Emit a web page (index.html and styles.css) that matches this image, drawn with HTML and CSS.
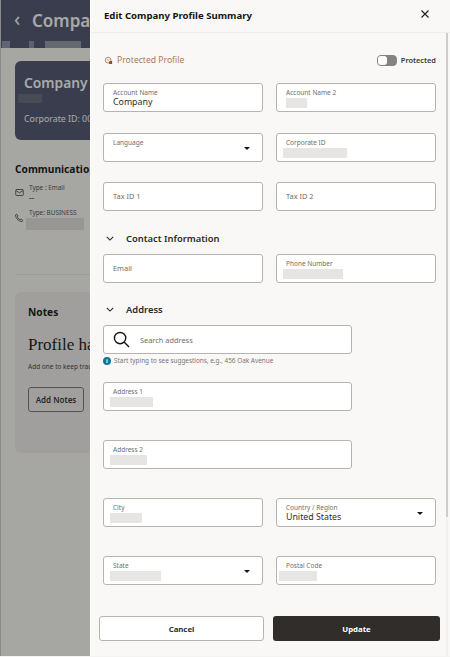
FILE: index.html
```html
<!DOCTYPE html>
<html lang="en">
<head>
<meta charset="utf-8">
<title>Edit Company Profile Summary</title>
<link rel="stylesheet" href="styles.css">
</head>
<body>
<div class="page">
  <div class="under">
    <header class="page-head">
      <span class="back">&#8249;</span>
      <span class="page-title">Company</span>
    </header>
    <div class="head-strip"></div>
    <section class="company-card">
      <h2>Company</h2>
      <div class="smudge-dark"></div>
      <p>Corporate ID: 00</p>
    </section>
    <section class="comm">
      <h3>Communication</h3>
      <div class="comm-row first">
        <svg class="comm-icon" viewBox="0 0 12 12"><rect x="1" y="2" width="10" height="8" rx="1" fill="none" stroke="#333" stroke-width="1"/><path d="M1.5 3.500 6 6.500l4.500-3" fill="none" stroke="#333"/></svg>
        <div><div class="comm-type">Type : Email</div><div class="comm-val">--</div></div>
      </div>
      <div class="comm-row phone">
        <svg class="comm-icon" viewBox="0 0 12 12"><path d="M2 1.500 4 4 3 5.500c.8 1.600 2 2.800 3.500 3.500L8 8l2.500 2-1 1.500C5 11.500.5 7 .8 2.500z" fill="none" stroke="#333"/></svg>
        <div><div class="comm-type">Type: BUSINESS</div><div class="smudge-gray"></div></div>
      </div>
    </section>
    <div class="divider"></div>
    <section class="notes">
      <h3>Notes</h3>
      <div class="notes-title">Profile ha</div>
      <p>Add one to keep track</p>
      <div class="notes-btn">Add Notes</div>
    </section>
  </div>

  <div class="scrim"></div>

  <aside class="panel">
    <div class="panel-head">
      <h1>Edit Company Profile Summary</h1>
      <svg class="close" viewBox="0 0 10 10"><path d="M1.500 1.500l7 7M8.500 1.500l-7 7" stroke="#222" stroke-width="1.200" fill="none"/></svg>
    </div>
    <div class="panel-body">
      <div class="protected-row">
        <div class="protected-label">
          <svg class="shield" viewBox="0 0 12 12"><circle cx="5.500" cy="5.500" r="3.800" fill="none" stroke="#a9714b" stroke-width="1.100"/><path d="M3.800 5.200h3.200" stroke="#a9714b"/><rect x="6.800" y="6.800" width="4" height="3.800" rx=".6" fill="#8c4a20"/></svg>
          <span>Protected Profile</span>
        </div>
        <div class="switch-wrap">
          <span class="switch"><span class="knob"></span></span>
          <span class="switch-text">Protected</span>
        </div>
      </div>

      <div class="grid">
        <div class="field"><label>Account Name</label><div class="value">Company</div></div>
        <div class="field"><label>Account Name 2</label><div class="blur w21"></div></div>
      </div>
      <div class="grid row-2">
        <div class="field select"><label>Language</label><span class="caret"></span></div>
        <div class="field"><label>Corporate ID</label><div class="blur w64 out"></div></div>
      </div>
      <div class="grid row-3">
        <div class="field empty"><label>Tax ID 1</label></div>
        <div class="field empty"><label>Tax ID 2</label></div>
      </div>

      <div class="section-head sec-contact">
        <svg class="chev" viewBox="0 0 10 6"><path d="M1 1l4 4 4-4" fill="none" stroke="#222" stroke-width="1.300"/></svg>
        <span>Contact Information</span>
      </div>
      <div class="grid">
        <div class="field empty"><label>Email</label></div>
        <div class="field"><label>Phone Number</label><div class="blur w60 out"></div></div>
      </div>

      <div class="section-head sec-address">
        <svg class="chev" viewBox="0 0 10 6"><path d="M1 1l4 4 4-4" fill="none" stroke="#222" stroke-width="1.300"/></svg>
        <span>Address</span>
      </div>
      <div class="wide">
        <div class="field search">
          <svg class="search-icon" viewBox="0 0 18 18"><circle cx="7.500" cy="7.500" r="6" fill="none" stroke="#161513" stroke-width="1.500"/><path d="M12 12l5 5" stroke="#161513" stroke-width="1.500"/></svg>
          <span class="search-text">Search address</span>
        </div>
        <div class="hint">
          <span class="info">i</span>
          <span>Start typing to see suggestions, e.g., 456 Oak Avenue</span>
        </div>
      </div>
      <div class="wide addr1">
        <div class="field"><label>Address 1</label><div class="blur w43 out"></div></div>
      </div>
      <div class="wide addr2">
        <div class="field"><label>Address 2</label><div class="blur w37 out"></div></div>
      </div>
      <div class="grid row-city">
        <div class="field"><label>City</label><div class="blur w32 out"></div></div>
        <div class="field select"><label>Country / Region</label><div class="value">United States</div><span class="caret"></span></div>
      </div>
      <div class="grid row-state">
        <div class="field select"><label>State</label><div class="blur w51 out"></div><span class="caret"></span></div>
        <div class="field"><label>Postal Code</label><div class="blur w38 farout"></div></div>
      </div>
    </div>
    <div class="panel-foot">
      <div class="btn cancel">Cancel</div>
      <div class="btn update">Update</div>
    </div>
    <div class="scrollbar"><div class="thumb"></div></div>
  </aside>
</div>
</body>
</html>
```
FILE: styles.css
```css
* { box-sizing: border-box; }
html, body { margin: 0; padding: 0; }
body { width: 450px; height: 657px; overflow: hidden; font-family: "Noto Sans", "Open Sans", sans-serif; color: #161513; background: #f4f3f1; }
h1, h2, h3, p { margin: 0; }

.page { position: relative; width: 450px; height: 656px; overflow: hidden; }
.under { width: 90px; height: 656px; background: #fbfaf8; overflow: hidden; border-left: 1px solid #d0cfcc; }
.page-head { width: 89px; height: 41px; background: #4e5470; display: flex; align-items: center; padding: 0 0 0 13px; color: #fff; overflow: hidden; }
.back { font-size: 20px; line-height: 20px; width: 18px; margin-top: -3px; flex: none; }
.page-title { font-size: 17px; font-weight: 600; white-space: nowrap; }
.head-strip { width: 89px; height: 7px; background: linear-gradient(90deg, #4e5470 0 1px, #8d94a5 1px 9px, #4e5470 9px 28px, #7d8fb0 28px 33px, #4e5470 33px 44px, #9298a8 44px 80px, #4e5470 80px); }
.company-card { margin: 13px 0 0 14px; width: 76px; height: 79px; border-radius: 6px 0 0 6px; background: #4e5470; color: #fff; padding: 11px 0 0 9px; overflow: hidden; white-space: nowrap; }
.company-card h2 { font-size: 13.800px; line-height: 21px; font-weight: 600; }
.company-card p { font-size: 8.800px; line-height: 12px; margin-top: 10px; }
.smudge-dark { width: 24px; height: 9px; margin: 1px 0 0 -6px; background: #646a7c; }
.comm { margin: 22px 0 0 14px; white-space: nowrap; width: 75px; overflow: hidden; }
.comm h3, .notes h3 { font-size: 10.200px; line-height: 14px; font-weight: 700; }
.comm-row { display: flex; gap: 5px; margin-top: 4px; }
.comm-row.first { margin-top: 7px; }
.comm-row.phone { margin-top: 5px; }
.comm-icon { width: 9px; height: 9px; margin-top: 5px; flex: none; }
.comm-type { font-size: 6.400px; line-height: 10px; color: #555; }
.comm-val { font-size: 8px; line-height: 10px; color: #333; }
.smudge-gray { width: 58px; height: 12px; background: #e2e1df; margin: 0 0 0 -3px; }
.divider { width: 75px; height: 1px; margin: 44px 0 0 14px; background: #ecebe9; }
.notes { margin: 17px 0 0 14px; width: 76px; height: 161px; background: #f1f0ee; border-radius: 6px 0 0 6px; padding: 13px 0 0 13px; white-space: nowrap; overflow: hidden; }
.notes-title { font-family: "Liberation Serif", serif; font-size: 17px; line-height: 20px; margin-top: 16px; }
.notes p { font-size: 6.500px; line-height: 10px; margin-top: 7px; color: #444; }
.notes-btn { width: 56px; height: 25px; margin-top: 15px; border: 1px solid #777; border-radius: 3px; font-size: 8px; font-weight: 600; display: flex; align-items: center; justify-content: center; color: #333; }
.scrim { position: absolute; inset: 0; background: rgba(22, 21, 19, 0.37); }

.panel { position: absolute; top: 0; left: 90px; width: 360px; height: 656px; background: #f9f8f6; display: flex; flex-direction: column; border-left: 1px solid #fff; }
.panel-head { height: 33px; flex: none; display: flex; align-items: center; justify-content: space-between; padding: 0 20px 1px 13px; border-bottom: 1px solid #f1efec; }
.panel-head h1 { font-size: 9.600px; font-weight: 700; color: #161513; white-space: nowrap; }
.close { width: 10px; height: 10px; margin-top: -3px; }
.panel-body { flex: 1; padding: 0 14px 0 12px; overflow: hidden; }
.protected-row { display: flex; justify-content: space-between; align-items: center; height: 50px; padding: 4px 0 0 1px; }
.protected-label { display: flex; align-items: center; gap: 4px; color: #ad7a55; font-size: 8.600px; }
.shield { width: 9px; height: 9px; margin-top: 1px; }
.switch-wrap { display: flex; align-items: center; gap: 4px; }
.switch { width: 20px; height: 11px; border-radius: 4px; background: #85827f; border: 1px solid #85827f; display: block; }
.knob { display: block; width: 9px; height: 9px; background: #fff; border-radius: 3px; }
.switch-text { font-size: 7.400px; font-weight: 600; color: #3a3937; }

.grid { display: grid; grid-template-columns: 160px 160px; column-gap: 13px; }
.row-2 { margin-top: 21px; }
.row-3 { margin-top: 20px; }
.wide { width: 249px; }
.field { position: relative; height: 29px; background: #fff; border: 1px solid #b6b4b0; border-radius: 3px; padding: 5px 9px 0; }
.field label { display: block; font-size: 6.500px; line-height: 8px; color: #6f6e6c; white-space: nowrap; }
.value { font-size: 8.800px; line-height: 10px; color: #2e2d2b; white-space: nowrap; }
.field.empty { padding: 0 9px 2px; display: flex; align-items: center; }
.field.empty label { font-size: 7.400px; }
.caret { position: absolute; right: 12px; top: 13px; border-left: 3px solid transparent; border-right: 3px solid transparent; border-top: 3px solid #161513; }
.blur { height: 10px; margin-top: 1px; background: #e6e5e3; filter: blur(.6px); }
.blur.out { margin-left: -3px; }
.blur.farout { margin-left: -7px; }
.w21 { width: 21px; }
.w64 { width: 64px; }
.w60 { width: 60px; }
.w43 { width: 43px; }
.w37 { width: 37px; }
.w32 { width: 32px; }
.w51 { width: 51px; }
.w38 { width: 38px; }

.section-head { display: flex; align-items: center; gap: 12px; font-size: 9.400px; font-weight: 600; color: #2b2a28; white-space: nowrap; padding-left: 3px; height: 15px; }
.sec-contact { margin-top: 20px; margin-bottom: 8px; }
.sec-address { margin-top: 19px; margin-bottom: 8px; }
.chev { width: 8px; height: 5px; }

.field.search { display: flex; align-items: center; padding: 0 0 0 9px; }
.search-icon { width: 17px; height: 17px; flex: none; }
.search-text { font-size: 7.400px; color: #6f6e6c; margin-left: 10px; }
.hint { display: flex; align-items: center; gap: 3px; margin-top: 1px; height: 11px; font-size: 6.400px; color: #77757a; white-space: nowrap; }
.info { width: 8px; height: 8px; border-radius: 50%; background: #1f6f9e; color: #fff; font-size: 6px; font-weight: 700; line-height: 8px; text-align: center; flex: none; }
.addr1 { margin-top: 16px; }
.addr2 { margin-top: 29px; }
.row-city { margin-top: 29px; }
.row-state { margin-top: 29px; }

.panel-foot { position: absolute; left: 8px; bottom: 15px; display: flex; gap: 9px; }
.btn { height: 25px; border-radius: 3px; display: flex; align-items: center; justify-content: center; font-size: 7.800px; font-weight: 700; }
.cancel { width: 165px; background: #fff; border: 1px solid #b6b4b0; color: #2e2d2b; }
.update { width: 167px; background: #312d2a; color: #fff; }
.scrollbar { position: absolute; top: 33px; right: 2px; width: 2px; height: 623px; background: #f1f0ee; }
.thumb { height: 484px; background: #cfcdca; }
```
